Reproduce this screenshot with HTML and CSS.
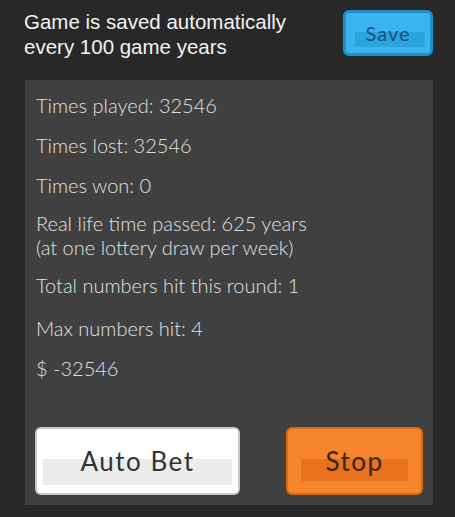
FILE: index.html
```html
<!DOCTYPE html>
<html lang="en">
<head>
    <meta charset="UTF-8">
    <meta name="viewport" content="width=device-width, initial-scale=1.0">
    <title>Lottery Simulator</title>
    <link rel="stylesheet" href="styles.css">
</head>
<body>
    <div id="header">
        <div class="save-note">Game is saved automatically<br>every 100 game years</div>
        <button class="btn btn-save"><span>Save</span></button>
    </div>

    <div id="panel">
        <div class="stats">
            <p>Times played: 32546</p>
            <p>Times lost: 32546</p>
            <p class="tight-top">Times won: 0</p>
            <p class="tight">Real life time passed: 625 years<br>(at one lottery draw per week)</p>
            <p class="loose">Total numbers hit this round: 1</p>
            <p>Max numbers hit: 4</p>
            <p>$ -32546</p>
        </div>
        <div class="actions">
            <button class="btn btn-auto"><span>Auto Bet</span></button>
            <button class="btn btn-stop"><span>Stop</span></button>
        </div>
    </div>
</body>
</html>
```

FILE: styles.css
```css
/* Reset margin for body */
body {
    margin: 0;
    background-color: #282828;
    width: 455px;
    height: 517px;
    overflow: hidden;
}

#header {
    display: flex;
    justify-content: space-between;
    align-items: flex-start;
    padding: 9px 22px 0 24px;
    height: 80px;
    box-sizing: border-box;
}

.save-note {
    font-family: "Liberation Sans", Arial, sans-serif;
    font-size: 20.5px;
    line-height: 25px;
    color: #f2f2f2;
}

/* Shared button look */
.btn {
    position: relative;
    border-radius: 6px;
    padding: 0;
    font-family: Lato, sans-serif;
    cursor: pointer;
    display: flex;
    align-items: center;
    justify-content: center;
}

.btn span {
    position: relative; /* above the lower band */
}

.btn::before {
    content: "";
    position: absolute;
}

.btn-save {
    margin-top: 1px;
    width: 90px;
    height: 46px;
    background-color: #39b4ef;
    border: 3px solid #1f8fc8;
    color: #1c5372;
    font-size: 20px;
    letter-spacing: 1px;
}

.btn-save::before {
    background-color: #2aa4de;
    left: 9px;
    right: 5px;
    top: 19px;
    bottom: 6px;
}

#panel {
    display: flex;
    flex-direction: column;
    margin: 0 22px 0 25px;
    height: 425px;
    background-color: #404040;
    box-sizing: border-box;
    padding: 13px 10px 10px 10px;
}

.stats {
    flex: 1;
}

.stats p {
    margin: 0 0 16px 1px;
    font-family: Lato, sans-serif;
    font-weight: 300;
    font-size: 20px;
    line-height: 24px;
    color: #e0e0e0;
}

.stats p.tight-top {
    margin-bottom: 14px;
}

.stats p.tight {
    margin-bottom: 14px;
}

.stats p.loose {
    margin-bottom: 19px;
}

.actions {
    display: flex;
    justify-content: space-between;
}

.btn-auto {
    width: 205px;
    height: 68px;
    background-color: #ffffff;
    border: 2px solid #c9c9c9;
    color: #333333;
    font-size: 26px;
    letter-spacing: 1.5px;
}

.btn-auto::before {
    background-color: #ececec;
    left: 6px;
    right: 6px;
    top: 30px;
    bottom: 8px;
}

.btn-stop {
    width: 137px;
    height: 68px;
    background-color: #f6852c;
    border: 2px solid #d56a16;
    color: #3a2412;
    font-size: 26px;
    letter-spacing: 1.5px;
}

.btn-stop::before {
    background-color: #e8721e;
    left: 13px;
    right: 13px;
    top: 30px;
    bottom: 12px;
}
```
